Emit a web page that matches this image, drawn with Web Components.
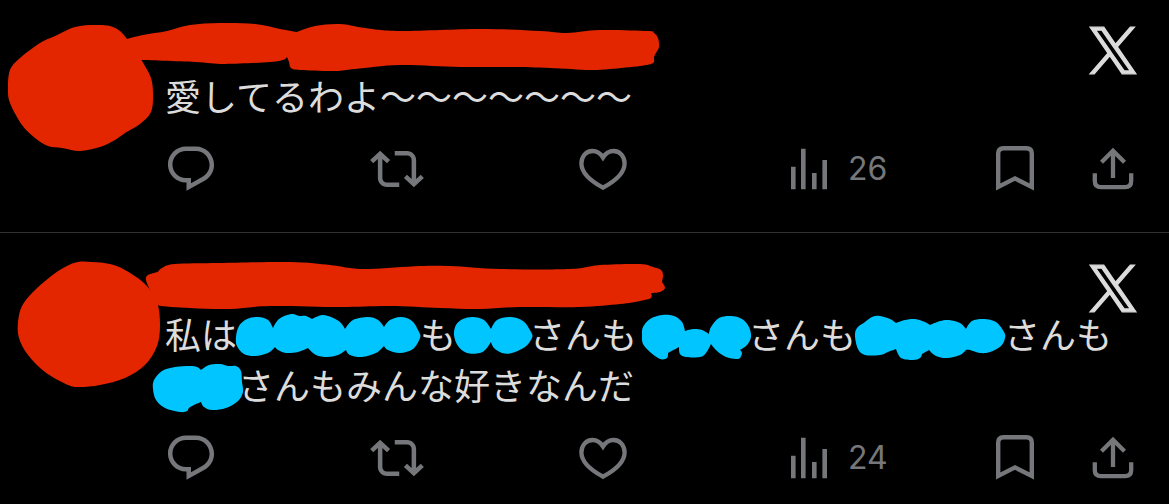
<!DOCTYPE html>
<html lang="ja">
<head>
<meta charset="utf-8">
<meta name="viewport" content="width=device-width, initial-scale=1">
<title>X</title>
<style>
  body { margin: 0; background: #000; }
</style>
</head>
<body>
<x-timeline>
  <x-post views="26">
    <ink-blot slot="ink" color="#e32600" box="0 0 680 160" points="127,39 120,31 110,26 95,25 75,27 55,36 40,43 20,58 10,70 8,88 10,103 22,125 35,138 48,146 62,148 80,151 100,147 115,140 125,133 140,124 151,112 153,95 151,78 142,61 141,60 195,62 225,64 270,62 283,60 287,57 289,62 291,68 300,70 335,71 355,69 400,65 460,67 510,67 550,68 590,70 610,69 640,66 653,63 654,57 656,53 659,47 658,38 654,33 648,31 600,30 567,33 540,31 480,29 400,31 365,28 340,24 315,26 297,32 280,29 255,24 220,23 190,25 167,31 143,35"></ink-blot>
    愛してるわよ〜〜〜〜〜〜〜
  </x-post>
  <x-post views="24">
    <ink-blot slot="ink" color="#e32600" box="0 233 680 160" points="92,262 110,264 125,270 145,284 157,302 160,325 157,346 145,365 125,378 100,385 80,387 68,385 45,372 28,355 19,338 18,322 22,306 33,292 50,277 65,267 78,262"></ink-blot>
    <ink-blot slot="ink" color="#e32600" box="0 233 680 160" points="146,280 148,275 158,272 162,268 175,264 220,263 290,262 330,265 350,268 370,269 420,266 450,266 500,269 570,269 600,265 640,264 653,267 661,270 663,275 662,282 665,288 660,292 651,293 651,298 640,301 620,304 580,307 520,307 480,309 440,308 390,306 340,307 270,306 230,309 190,308 157,305 154,297 150,290"></ink-blot>
    私は<ink-blot color="#00c5ff" box="237 308 183 51" points="236,337 239,326 247,319 258,317 268,320 273,328 279,319 291,314 300,316 306,316 312,319 322,315 331,317 340,322 345,329 353,320 368,317 378,320 384,327 390,320 401,317 412,321 419,332 420,338 413,349 400,353 388,350 384,346 376,353 362,357 350,355 346,350 338,355 327,357 316,355 308,348 298,352 286,353 278,350 275,347 268,353 255,356 244,354 237,346"></ink-blot>も<ink-blot color="#00c5ff" box="456 308 73 51" points="454,335 456,325 463,319 473,317 484,320 491,329 497,320 510,317 523,321 531,332 532,338 525,347 512,353 502,353 494,348 491,342 486,349 480,353 467,353 458,346"></ink-blot>さんも<ink-blot color="#00c5ff" box="637 308 111 51" points="642,335 643,327 650,319 662,315 674,316 682,322 685,331 693,329 702,330 709,334 711,327 719,318 731,316 742,319 749,327 751,337 747,345 740,350 742,353 740,358 736,359 726,357 717,351 711,344 706,353 700,357 686,357 680,354 679,347 668,353 667,358 660,359 650,352 643,344"></ink-blot>さんも<ink-blot color="#00c5ff" box="856 308 148 51" points="855,336 857,328 865,322 872,317 880,316 890,319 896,323 905,320 915,319 925,322 930,325 940,321 949,320 960,323 966,329 972,321 984,319 996,322 1004,332 1005,338 1001,346 990,352 980,353 970,350 966,350 960,355 947,358 936,356 929,350 922,354 920,358 913,360 901,358 896,349 888,352 880,355 865,355 858,349"></ink-blot>さんも<ink-blot color="#00c5ff" box="165 359 73 51" points="153,389 154,380 162,371 175,367 190,366 197,367 201,370 209,365 220,364 228,366 236,366 241,371 242,382 243,392 238,401 226,408 212,410 204,407 201,402 194,405 189,408 187,411 180,412 165,408 156,400"></ink-blot>さんもみんな好きなんだ
  </x-post>
</x-timeline>

<script>
  const ICONS = {
    reply: '<path transform="scale(2.25)" fill="currentColor" d="M1.751 10c0-4.42 3.584-8 8.005-8h4.366c4.49 0 8.129 3.64 8.129 8.13 0 2.96-1.607 5.68-4.196 7.11l-8.054 4.46v-3.69h-.067c-4.49.1-8.183-3.51-8.183-8.01zm8.005-6c-3.317 0-6.005 2.69-6.005 6 0 3.37 2.77 6.08 6.138 6.01l.351-.01h1.761v2.3l5.087-2.81c1.951-1.08 3.163-3.13 3.163-5.36 0-3.39-2.744-6.13-6.129-6.13H9.756z"/>',
    repost: '<path transform="scale(2.25)" fill="currentColor" d="M4.5 3.88l4.432 4.14-1.364 1.46L5.5 7.55V16c0 1.1.896 2 2 2H13v2H7.5c-2.209 0-4-1.79-4-4V7.55L1.432 9.48.068 8.02 4.5 3.88zM16.5 6H11V4h5.5c2.209 0 4 1.79 4 4v8.45l2.068-1.93 1.364 1.46-4.432 4.14-4.432-4.14 1.364-1.46 2.068 1.93V8c0-1.1-.896-2-2-2z"/>',
    like: '<path fill="none" stroke="currentColor" stroke-width="4.3" d="M27 15.5C24.5 11.5 20.5 9 16.5 9C10 9 5.4 14.5 5.4 21.5C5.4 31.5 15 39.2 27 45.7C39 39.2 48.6 31.5 48.6 21.5C48.6 14.5 44 9 37.5 9C33.5 9 29.5 11.5 27 15.5Z"/>',
    views: '<path fill="currentColor" d="M9 24.7h4.6v22.6H9zM19 6.7h4.6v40.6H19zM30 31h4.6v16.3H30zM40.4 18H45v29.3h-4.6z"/>',
    bookmark: '<path fill="none" stroke="currentColor" stroke-width="4.4" d="M10.2 45V11.5Q10.2 6.2 15.5 6.2H38.5Q43.8 6.2 43.8 11.5V45L27 36.4Z"/>',
    share: '<path fill="none" stroke="currentColor" stroke-width="4.3" d="M8.8 31.3V39Q8.8 45.2 15 45.2H39Q45.2 45.2 45.2 39V31.3M27 36V9M15.5 20.2L27 8.7L38.5 20.2"/>'
  };

  // A freehand blot: a closed curve through the given points, round where it
  // bulges outwards and sharp in the notches where two strokes meet.
  function blotPath(p) {
    const n = p.length;
    const at = i => p[(i + n) % n];
    const area = p.reduce((s, a, i) => s + a[0] * at(i + 1)[1] - a[1] * at(i + 1)[0], 0);
    const tangents = p.map((b, i) => {
      const a = at(i - 1), c = at(i + 1);
      const ux = b[0] - a[0], uy = b[1] - a[1], vx = c[0] - b[0], vy = c[1] - b[1];
      const turn = (ux * vy - uy * vx) / (Math.hypot(ux, uy) * Math.hypot(vx, vy)) * Math.sign(area);
      return turn < -0.45 ? [0, 0] : [(c[0] - a[0]) / 6, (c[1] - a[1]) / 6];
    });
    let d = `M${p[0]}`;
    for (let i = 0; i < n; i++) {
      const b = p[i], c = at(i + 1), t = tangents[i], u = tangents[(i + 1) % n];
      d += `C${b[0] + t[0]} ${b[1] + t[1]} ${c[0] - u[0]} ${c[1] - u[1]} ${c[0]} ${c[1]}`;
    }
    return d + 'Z';
  }

  customElements.define('ink-blot', class extends HTMLElement {
    connectedCallback() {
      if (this.shadowRoot) return;
      const [x, y, w, h] = this.getAttribute('box').split(' ');
      const points = this.getAttribute('points').split(' ').map(s => s.split(',').map(Number));
      this.attachShadow({ mode: 'open' }).innerHTML = `
        <style>
          :host { display: inline-block; vertical-align: top; }
          svg { display: block; overflow: visible; }
        </style>
        <svg width="${w}" height="${h}" viewBox="${x} ${y} ${w} ${h}" aria-hidden="true"><path fill="${this.getAttribute('color')}" d="${blotPath(points)}"/></svg>`;
    }
  });

  customElements.define('x-logo', class extends HTMLElement {
    connectedCallback() {
      if (this.shadowRoot) return;
      this.attachShadow({ mode: 'open' }).innerHTML = `
        <style>
          :host { display: flex; justify-content: center; width: 52px; }
          svg { display: block; overflow: visible; }
        </style>
        <svg width="48" height="49" viewBox="-30 -20 1260 1267" role="img" aria-label="X"><path fill="#dcdcdc" stroke="#dcdcdc" stroke-width="36" d="M714.163 519.284L1160.89 0H1055.03L667.137 450.887L357.328 0H0L468.492 681.821L0 1226.37H105.866L515.491 750.218L842.672 1226.37H1200L714.137 519.284H714.163ZM569.165 687.828L521.697 619.934L144.011 79.6944H306.615L611.412 515.685L658.88 583.579L1055.08 1150.3H892.476L569.165 687.854V687.828Z"/></svg>`;
    }
  });

  customElements.define('x-action', class extends HTMLElement {
    connectedCallback() {
      if (this.shadowRoot) return;
      this.attachShadow({ mode: 'open' }).innerHTML = `
        <style>
          :host { display: block; }
          button {
            display: flex; align-items: center; gap: 13px; height: 52px;
            margin: 0; padding: 0; border: 0; background: none; cursor: pointer;
            color: #76777b; font: 400 32px/52px Inter, "Liberation Sans", sans-serif;
          }
          svg { display: block; overflow: visible; }
        </style>
        <button type="button" aria-label="${this.getAttribute('label')}"><svg width="52" height="52" viewBox="1 1 52 52" aria-hidden="true">${ICONS[this.getAttribute('icon')]}</svg><slot></slot></button>`;
    }
  });

  customElements.define('x-post', class extends HTMLElement {
    connectedCallback() {
      if (this.shadowRoot) return;
      this.attachShadow({ mode: 'open' }).innerHTML = `
        <style>
          :host {
            display: block; position: relative;
            padding: 31px 30px 20px 165px;
            color: #dcdcdc;
            font: 400 36px/51px "Noto Sans CJK JP", sans-serif;
          }
          :host(:first-child) { padding-top: 26px; }
          :host(:not(:last-child)) { padding-bottom: 37px; border-bottom: 1px solid #2f3134; }
          header { display: flex; justify-content: flex-end; height: 44px; }
          p { margin: 0 0 22px; }
          footer { display: grid; grid-template-columns: repeat(4, 1fr) auto; }
          .end { display: flex; gap: 46px; }
          ::slotted([slot="ink"]) { position: absolute; left: 0; top: 0; pointer-events: none; }
        </style>
        <article>
          <header><x-logo></x-logo></header>
          <p><slot></slot></p>
          <footer>
            <x-action icon="reply" label="返信"></x-action>
            <x-action icon="repost" label="リポスト"></x-action>
            <x-action icon="like" label="いいね"></x-action>
            <x-action icon="views" label="表示 ${this.getAttribute('views')}">${this.getAttribute('views')}</x-action>
            <div class="end">
              <x-action icon="bookmark" label="ブックマーク"></x-action>
              <x-action icon="share" label="共有"></x-action>
            </div>
          </footer>
        </article>
        <slot name="ink"></slot>`;
    }
  });

  customElements.define('x-timeline', class extends HTMLElement {
    connectedCallback() {
      if (this.shadowRoot) return;
      this.attachShadow({ mode: 'open' }).innerHTML = `
        <style>:host { display: block; background: #000; }</style>
        <main><slot></slot></main>`;
    }
  });
</script>
</body>
</html>
